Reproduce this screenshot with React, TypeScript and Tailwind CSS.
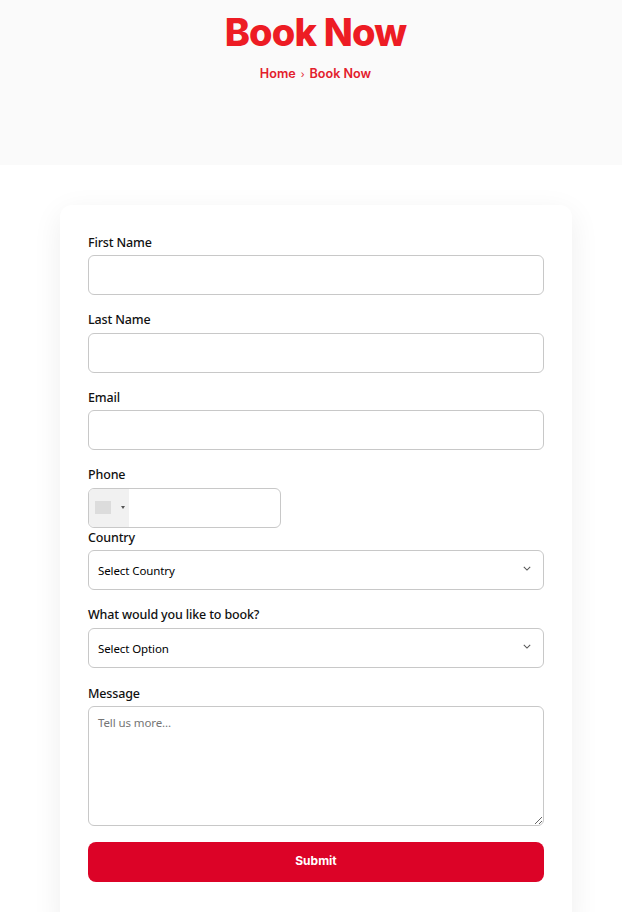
import React from 'react';

const labelClass = "block mb-[3px] text-[12.5px] leading-[19.5px] tracking-[-0.15px] font-medium text-[#111]";
const inputClass = "block w-full h-10 px-[9px] rounded-md border border-[#c8c8c8] bg-white text-[11.5px] tracking-[-0.1px] text-black outline-none";

function Chevron() {
  return (
    <svg viewBox="0 0 10 6" className="absolute right-[13px] top-[16px] w-2 h-[5px] pointer-events-none" fill="none" stroke="#555" strokeWidth="1.3">
      <path d="M1 1 L5 5 L9 1" />
    </svg>
  );
}

function Field({ label, children, className = "mb-[15px]" }: { label: string; children: React.ReactNode; className?: string }) {
  return (
    <div className={className}>
      <label className={labelClass}>{label}</label>
      {children}
    </div>
  );
}

function SelectField({ label, option, className }: { label: string; option: string; className?: string }) {
  return (
    <Field label={label} className={className}>
      <div className="relative">
        <select className={`${inputClass} appearance-none pt-[2px]`}>
          <option>{option}</option>
        </select>
        <Chevron />
      </div>
    </Field>
  );
}

export default function App() {
  return (
    <div className="bg-white font-['Noto_Sans',sans-serif] h-[912px] overflow-hidden">
      <div className="h-[165px] bg-[#fafafa] flex flex-col items-center font-['Inter',sans-serif] pl-[9px]">
        <h1 className="mt-[9px] text-[38px] leading-[46px] font-extrabold tracking-[-0.8px] text-[#ed1c24]">Book Now</h1>
        <div className="mt-[9px] text-[12.6px] leading-5 font-semibold text-[#e3202c] flex items-center">
          <span>Home</span>
          <span className="mx-[5px] text-[10px] font-normal">›</span>
          <span>Book Now</span>
        </div>
      </div>
      <div className="ml-[60px] mt-10 w-[512px] rounded-xl bg-white px-7 pt-[27.5px] pb-12 shadow-[0_8px_30px_rgba(0,0,0,0.07)]">
        <Field label="First Name"><input className={inputClass} /></Field>
        <Field label="Last Name"><input className={inputClass} /></Field>
        <Field label="Email"><input className={inputClass} /></Field>
        <div>
          <label className={labelClass}>Phone</label>
          <div className="flex w-[193px] h-10 rounded-md border border-[#c8c8c8] overflow-hidden">
            <div className="w-10 h-full bg-[#f1f1f1] flex items-center pl-[6px]">
              <div className="w-4 h-[13px] bg-[#dcdcdc]" />
              <div className="ml-[10px] w-0 h-0 border-x-2 border-x-transparent border-t-[3px] border-t-[#555]" />
            </div>
            <input className="flex-1 min-w-0 px-2 text-[12px] outline-none" />
          </div>
        </div>
        <SelectField label="Country" option="Select Country" />
        <SelectField label="What would you like to book?" option="Select Option" className="mb-4" />
        <div className="mb-4">
          <label className={labelClass}>Message</label>
          <textarea
            placeholder="Tell us more..."
            className="block w-full h-[120px] px-[9px] py-[7px] rounded-md border border-[#c8c8c8] text-[11.5px] tracking-[-0.1px] leading-[18px] outline-none placeholder:text-[#757575]"
          />
        </div>
        <button className="block w-full h-10 pb-[2px] rounded-lg bg-[#dc0327] text-white text-[12px] font-bold font-['Inter',sans-serif]">Submit</button>
      </div>
    </div>
  );
}
